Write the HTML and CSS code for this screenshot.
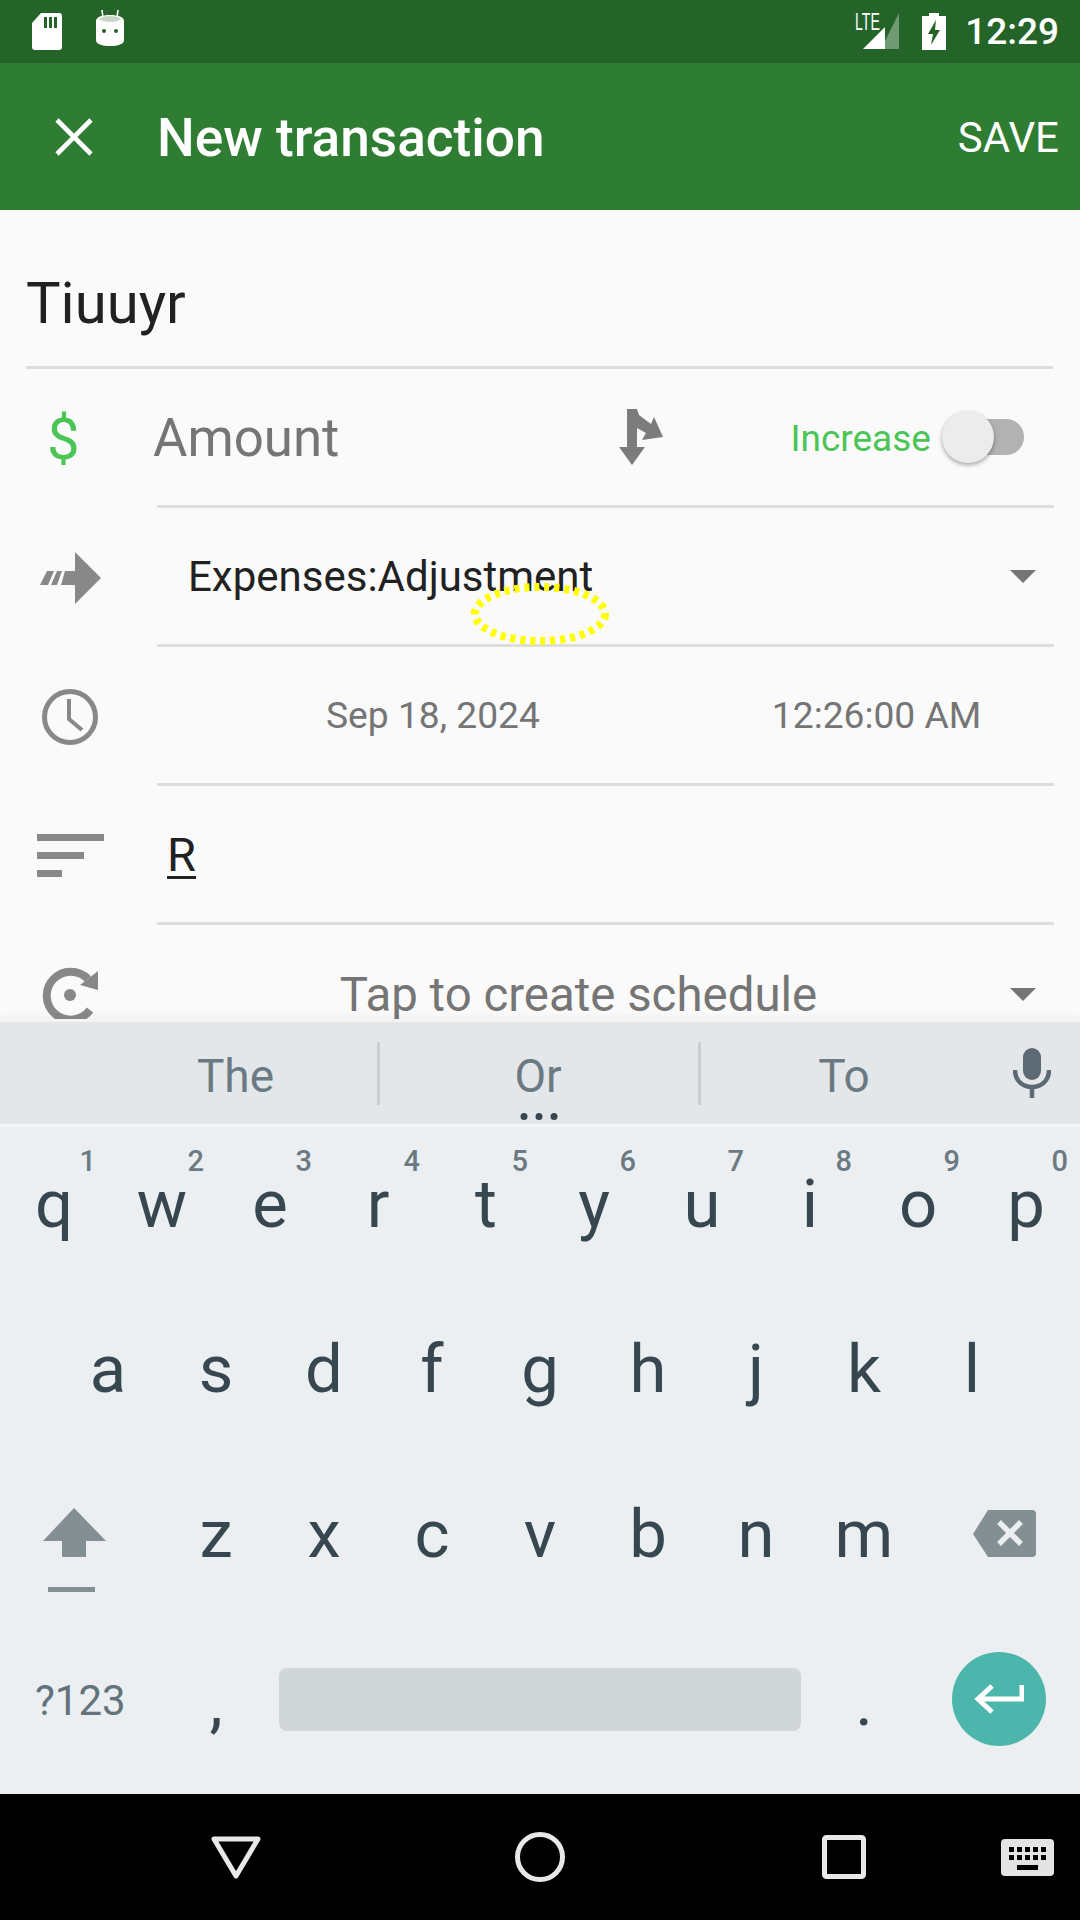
FILE: index.html
```html
<!DOCTYPE html>
<html lang="en">
<head>
<meta charset="utf-8">
<title>New transaction</title>
<link rel="stylesheet" href="styles.css">
</head>
<body>
<div class="screen">
  <header class="statusbar">
    <div class="status-left">
      <svg class="ic-sd" viewBox="0 0 30 37"><path fill="#fff" d="M9 0H27a3 3 0 0 1 3 3V34a3 3 0 0 1-3 3H3a3 3 0 0 1-3-3V10Z"/><path fill="#246428" d="M12 4h3v11h-3zM17 4h3v11h-3zM22 4h3v11h-3z"/></svg>
      <svg class="ic-bot" viewBox="0 0 30 37"><path fill="none" stroke="#fff" stroke-width="1.6" d="M8 8 7 0M22 8l1-8"/><path fill="#fff" d="M1 11C1 7 7 5 15 5s14 2 14 6V30c0 4-6 6-14 6S1 34 1 30Z"/><path fill="#c5d6c6" d="M4 9c2-2 6-3 11-3s9 1 11 3c-2 2-6 3-11 3S6 11 4 9Z"/><circle cx="9" cy="21" r="2" fill="#246428"/><circle cx="21" cy="21" r="2" fill="#246428"/></svg>
    </div>
    <div class="status-right">
      <svg class="ic-signal" viewBox="0 0 46 37"><path fill="#fff" fill-opacity=".35" d="M46 0V36H28Z"/><path fill="#fff" d="M10 36 32 14V36Z"/><text class="lte" x="2" y="17" textLength="25" lengthAdjust="spacingAndGlyphs">LTE</text></svg>
      <svg class="ic-batt" viewBox="0 0 24 37"><path fill="#fff" d="M7 0H17V3H24V37H0V3H7Z"/><path fill="#246428" d="M14 7 6 21h5l-2 11 9-15h-5Z"/></svg>
      <span class="clock">12:29</span>
    </div>
  </header>

  <div class="toolbar">
    <svg class="ic-close" viewBox="0 0 38 38"><path fill="none" stroke="#fff" stroke-width="4.6" d="M2 2 36 36M36 2 2 36"/></svg>
    <h1 class="toolbar-title">New transaction</h1>
    <span class="toolbar-save">SAVE</span>
  </div>

  <main class="form">
    <div class="title-field">Tiuuyr</div>

    <div class="row">
      <div class="row-icon"><span class="dollar">$</span></div>
      <div class="row-body amount-body">
        <span class="amount">Amount</span>
        <svg class="ic-split" viewBox="0 0 44 56"><path fill="#7c7c7c" d="M8 0h10l2 6 12 9 3-7 9 20-21 3 4-7-9-5V38h8L13 56 0 38H8Z"/></svg>
        <span class="increase">Increase</span>
        <span class="switch"><span class="switch-thumb"></span></span>
      </div>
    </div>

    <div class="row">
      <div class="row-icon">
        <svg class="ic-account" viewBox="0 0 61 52"><path fill="#888" d="M35 0 61 26 35 52V33H21l4-14H35ZM7 19h7L8 33H0ZM17 19h5l-5 14h-6Z"/></svg>
      </div>
      <div class="row-body account-body">
        <span class="account">Expenses:Adjustment</span>
        <span class="caret"></span>
      </div>
    </div>

    <div class="row">
      <div class="row-icon">
        <svg class="ic-clock" viewBox="0 0 56 56"><circle cx="28" cy="28" r="25.5" fill="none" stroke="#888" stroke-width="5"/><path fill="none" stroke="#888" stroke-width="4" d="M27 10V30L40 41"/></svg>
      </div>
      <div class="row-body date-body">
        <span class="date">Sep 18, 2024</span>
        <span class="time">12:26:00 AM</span>
      </div>
    </div>

    <div class="row">
      <div class="row-icon">
        <svg class="ic-sort" viewBox="0 0 67 43"><path fill="#888" d="M0 0H67V7H0ZM0 18H47V25H0ZM0 36H25V43H0Z"/></svg>
      </div>
      <div class="row-body">
        <span class="desc">R</span>
      </div>
    </div>

    <div class="row">
      <div class="row-icon">
        <svg class="ic-repeat" viewBox="0 0 56 60"><path fill="none" stroke="#888" stroke-width="8" d="M46 13A24 24 0 1 0 48 44"/><path fill="#888" d="M56 5V24L38 19Z"/><circle cx="28" cy="29" r="6" fill="#888"/></svg>
      </div>
      <div class="row-body schedule-body">
        <span class="schedule">Tap to create schedule</span>
        <span class="caret"></span>
      </div>
    </div>
  </main>

  <section class="ime">
    <div class="suggestions">
      <span class="sug sug-first">The</span>
      <span class="sug sug-mid">Or<span class="dots"><i></i><i></i><i></i></span></span>
      <span class="sug sug-last">To</span>
      <svg class="ic-mic" viewBox="0 0 38 50"><rect x="10" y="0" width="18" height="32" rx="9" fill="#5c6b73"/><path fill="none" stroke="#5c6b73" stroke-width="4.5" d="M2 22C2 33 10 39 19 39S36 33 36 22M19 39V50"/></svg>
    </div>
    <div class="keys">
      <div class="krow krow-top">
        <span class="key">q<b>1</b></span><span class="key">w<b>2</b></span><span class="key">e<b>3</b></span><span class="key">r<b>4</b></span><span class="key">t<b>5</b></span><span class="key">y<b>6</b></span><span class="key">u<b>7</b></span><span class="key">i<b>8</b></span><span class="key">o<b>9</b></span><span class="key">p<b>0</b></span>
      </div>
      <div class="krow krow-mid">
        <span class="key">a</span><span class="key">s</span><span class="key">d</span><span class="key">f</span><span class="key">g</span><span class="key">h</span><span class="key">j</span><span class="key">k</span><span class="key">l</span>
      </div>
      <div class="krow">
        <span class="key key-wide">
          <svg class="ic-shift" viewBox="0 0 63 84"><path fill="#838f93" d="M31 0 63 33H43V49H19V33H0ZM5 79H52V84H5Z"/></svg>
        </span>
        <span class="key">z</span><span class="key">x</span><span class="key">c</span><span class="key">v</span><span class="key">b</span><span class="key">n</span><span class="key">m</span>
        <span class="key key-wide">
          <svg class="ic-back" viewBox="0 0 63 47"><path fill="#838f93" d="M15 0H59a4 4 0 0 1 4 4V43a4 4 0 0 1-4 4H15L0 24Z"/><path fill="none" stroke="#eceff1" stroke-width="5.5" d="M26 12 48 34M48 12 26 34"/></svg>
        </span>
      </div>
      <div class="krow">
        <span class="key key-wide key-sym">?123</span>
        <span class="key key-punct">,</span>
        <span class="key-space-wrap"><span class="spacebar"></span></span>
        <span class="key key-punct">.</span>
        <span class="key key-wide">
          <span class="enter">
            <svg class="ic-enter" viewBox="0 0 50 32"><path fill="none" stroke="#fff" stroke-width="5" d="M48 2V16H5M18 3 4 16 18 29"/></svg>
          </span>
        </span>
      </div>
    </div>
  </section>

  <nav class="navbar">
    <svg class="ic-nav-back" viewBox="0 0 50 43"><path fill="none" stroke="#e8e8e8" stroke-width="5" stroke-linejoin="round" d="M3 3H47L25 40Z"/></svg>
    <svg class="ic-nav-home" viewBox="0 0 50 50"><circle cx="25" cy="25" r="22.5" fill="none" stroke="#e8e8e8" stroke-width="5"/></svg>
    <svg class="ic-nav-recent" viewBox="0 0 44 44"><rect x="2.5" y="2.5" width="39" height="39" rx="2" fill="none" stroke="#e8e8e8" stroke-width="5"/></svg>
    <svg class="ic-nav-kbd" viewBox="0 0 53 37"><rect width="53" height="37" rx="4" fill="#e4e4e4"/><path fill="#000" d="M8 8h5v5H8zM16 8h5v5h-5zM24 8h5v5h-5zM32 8h5v5h-5zM40 8h5v5h-5zM8 16h5v5H8zM16 16h5v5h-5zM24 16h5v5h-5zM32 16h5v5h-5zM40 16h5v5h-5zM16 26h21v5H16z"/></svg>
  </nav>

  <svg class="touch-mark" viewBox="0 0 140 64"><ellipse cx="70" cy="32" rx="65" ry="27" fill="none" stroke="#ffff00" stroke-width="8" stroke-dasharray="5 5"/></svg>
</div>
</body>
</html>
```
FILE: styles.css
```css
* { box-sizing: border-box; }
html, body { margin: 0; padding: 0; }
body { background: #000; font-family: Roboto, "Liberation Sans", sans-serif; }
.screen { position: relative; width: 1080px; height: 1920px; display: flex; flex-direction: column; overflow: hidden; background: #fafafa; }

/* status bar */
.statusbar { flex: 0 0 63px; background: #246428; display: flex; justify-content: space-between; align-items: flex-start; }
.status-left { display: flex; gap: 33px; padding: 13px 0 0 32px; }
.ic-sd { width: 30px; height: 37px; display: block; }
.ic-bot { width: 30px; height: 37px; display: block; margin-top: -3px; }
.status-right { display: flex; align-items: flex-start; padding: 13px 21px 0 0; }
.ic-signal { width: 46px; height: 37px; display: block; overflow: visible; }
.lte { font: 400 24px "Liberation Sans", sans-serif; fill: #fff; }
.ic-batt { width: 24px; height: 37px; margin-left: 23px; display: block; }
.clock { color: #fff; font-size: 37px; font-weight: 500; line-height: 37px; margin-left: 19px; }

/* toolbar */
.toolbar { flex: 0 0 147px; background: #2e7d32; display: flex; align-items: center; padding: 0 21px 0 55px; }
.ic-close { width: 38px; height: 38px; flex: none; }
.toolbar-title { margin: 3px 0 0 64px; color: #fff; font-size: 53.2px; font-weight: 500; flex: 1; }
.toolbar-save { color: #fff; font-size: 42px; font-weight: 400; margin-top: 2px; }

/* form */
.form { flex: 1; min-height: 0; overflow: hidden; background: #fafafa; }
.title-field { height: 159px; margin: 0 27px; border-bottom: 3px solid #ddd; padding-top: 60px; margin-left: 26px; font-size: 58px; line-height: 66px; color: #212121; }
.row { height: 139px; display: flex; margin-right: 26px; }
.row-icon { flex: 0 0 157px; display: flex; align-items: center; justify-content: flex-start; }
.row-body { flex: 1; border-bottom: 3px solid #ddd; display: flex; align-items: center; }
.dollar { margin-left: 47px; color: #4cc557; font-size: 58px; }
.ic-account { width: 61px; height: 52px; margin-left: 40px; }
.ic-clock { width: 56px; height: 56px; margin-left: 42px; }
.ic-sort { width: 67px; height: 43px; margin-left: 37px; }
.ic-repeat { width: 56px; height: 60px; margin-left: 42px; margin-top: 2px; }

.amount-body { position: relative; }
.amount { color: #757575; font-size: 52.8px; margin: 2px 0 0 -4px; }
.ic-split { width: 44px; height: 56px; margin-left: 280px; flex: none; }
.increase { color: #4cc557; font-size: 37px; margin: 2px 0 0 127px; }
.switch { position: relative; width: 79px; height: 36px; margin-left: 14px; border-radius: 18px; background: #b2b2b2; flex: none; }
.switch-thumb { position: absolute; left: -3px; top: -8px; width: 52px; height: 52px; border-radius: 50%; background: #ececec; box-shadow: 0 2px 4px rgba(0,0,0,.35); }

.account { margin-left: 31px; color: #212121; font-size: 42px; flex: 1; }
.caret { width: 0; height: 0; border-left: 13px solid transparent; border-right: 13px solid transparent; border-top: 13px solid #757575; margin-right: 18px; flex: none; }
.date-body { color: #757575; font-size: 37.2px; }
.date { margin-left: 169px; }
.time { margin-left: 232px; }
.desc { margin-left: 10px; font-size: 47px; color: #212121; text-decoration: underline; text-underline-offset: 5px; text-decoration-thickness: 3px; }
.schedule-body { border-bottom: 0; }
.schedule { flex: 1; text-align: center; color: #757575; font-size: 47.4px; padding-right: 10px; }

/* keyboard */
.ime { position: relative; flex: 0 0 775px; background: #eceff1; display: flex; flex-direction: column; border-top: 3px solid #f2f4f5; box-shadow: 0 -3px 6px rgba(0,0,0,.04); }
.suggestions { flex: 0 0 105px; background: #e3e7ea; border-bottom: 3px solid #f2f4f5; display: flex; align-items: center; padding-left: 96px; position: relative; }
.sug { height: 63px; padding: 5px 2px 0 0; display: flex; align-items: center; justify-content: center; color: #6b7a82; font-size: 46px; position: relative; }
.sug-first { width: 284px; border-right: 3px solid #c9ced2; }
.sug-mid { width: 321px; border-right: 3px solid #c9ced2; }
.sug-last { width: 288px; }
.dots { position: absolute; left: 50%; bottom: -15px; transform: translateX(-50%); display: flex; gap: 8px; }
.dots i { width: 7px; height: 7px; border-radius: 50%; background: #37474f; }
.ic-mic { width: 38px; height: 50px; margin-left: 24px; flex: none; }

.keys { flex: 1; display: flex; flex-direction: column; }
.krow { flex: 0 0 165px; display: flex; }
.krow-mid { padding-left: 54px; }
.key { position: relative; flex: 0 0 108px; display: flex; align-items: center; justify-content: center; font-size: 67px; color: #37474f; padding-bottom: 11px; }
.key b { position: absolute; top: 17px; right: 12px; font-size: 29px; font-weight: 500; color: #6b7a82; line-height: 34px; }
.key-wide { flex: 0 0 162px; }
.key-sym { font-size: 42px; color: #62737b; justify-content: flex-start; padding-left: 35px; padding-bottom: 9px; }
.key-punct { padding-bottom: 6px; }
.key-space-wrap { flex: 0 0 540px; display: flex; align-items: center; padding: 0 9px 10px; }
.spacebar { display: block; width: 100%; height: 63px; background: #d1d6d9; border-radius: 8px; }
.enter { width: 94px; height: 94px; border-radius: 50%; background: #4db6ac; display: flex; align-items: center; justify-content: center; }
.ic-enter { width: 50px; height: 32px; }
.ic-shift { width: 63px; height: 84px; display: block; margin-right: 13px; margin-top: 32px; }
.ic-back { width: 63px; height: 47px; display: block; margin-top: -2px; margin-left: 10px; }

/* nav bar */
.navbar { flex: 0 0 126px; background: #000; display: grid; grid-template-columns: 304px 304px 304px 84px; padding-left: 84px; align-items: center; justify-items: center; }
.ic-nav-back { width: 50px; height: 43px; }
.ic-nav-home { width: 50px; height: 50px; }
.ic-nav-recent { width: 44px; height: 44px; }
.ic-nav-kbd { width: 53px; height: 37px; justify-self: start; margin-left: 5px; }

/* touch indicator */
.touch-mark { position: absolute; left: 470px; top: 582px; width: 140px; height: 64px; }
```
